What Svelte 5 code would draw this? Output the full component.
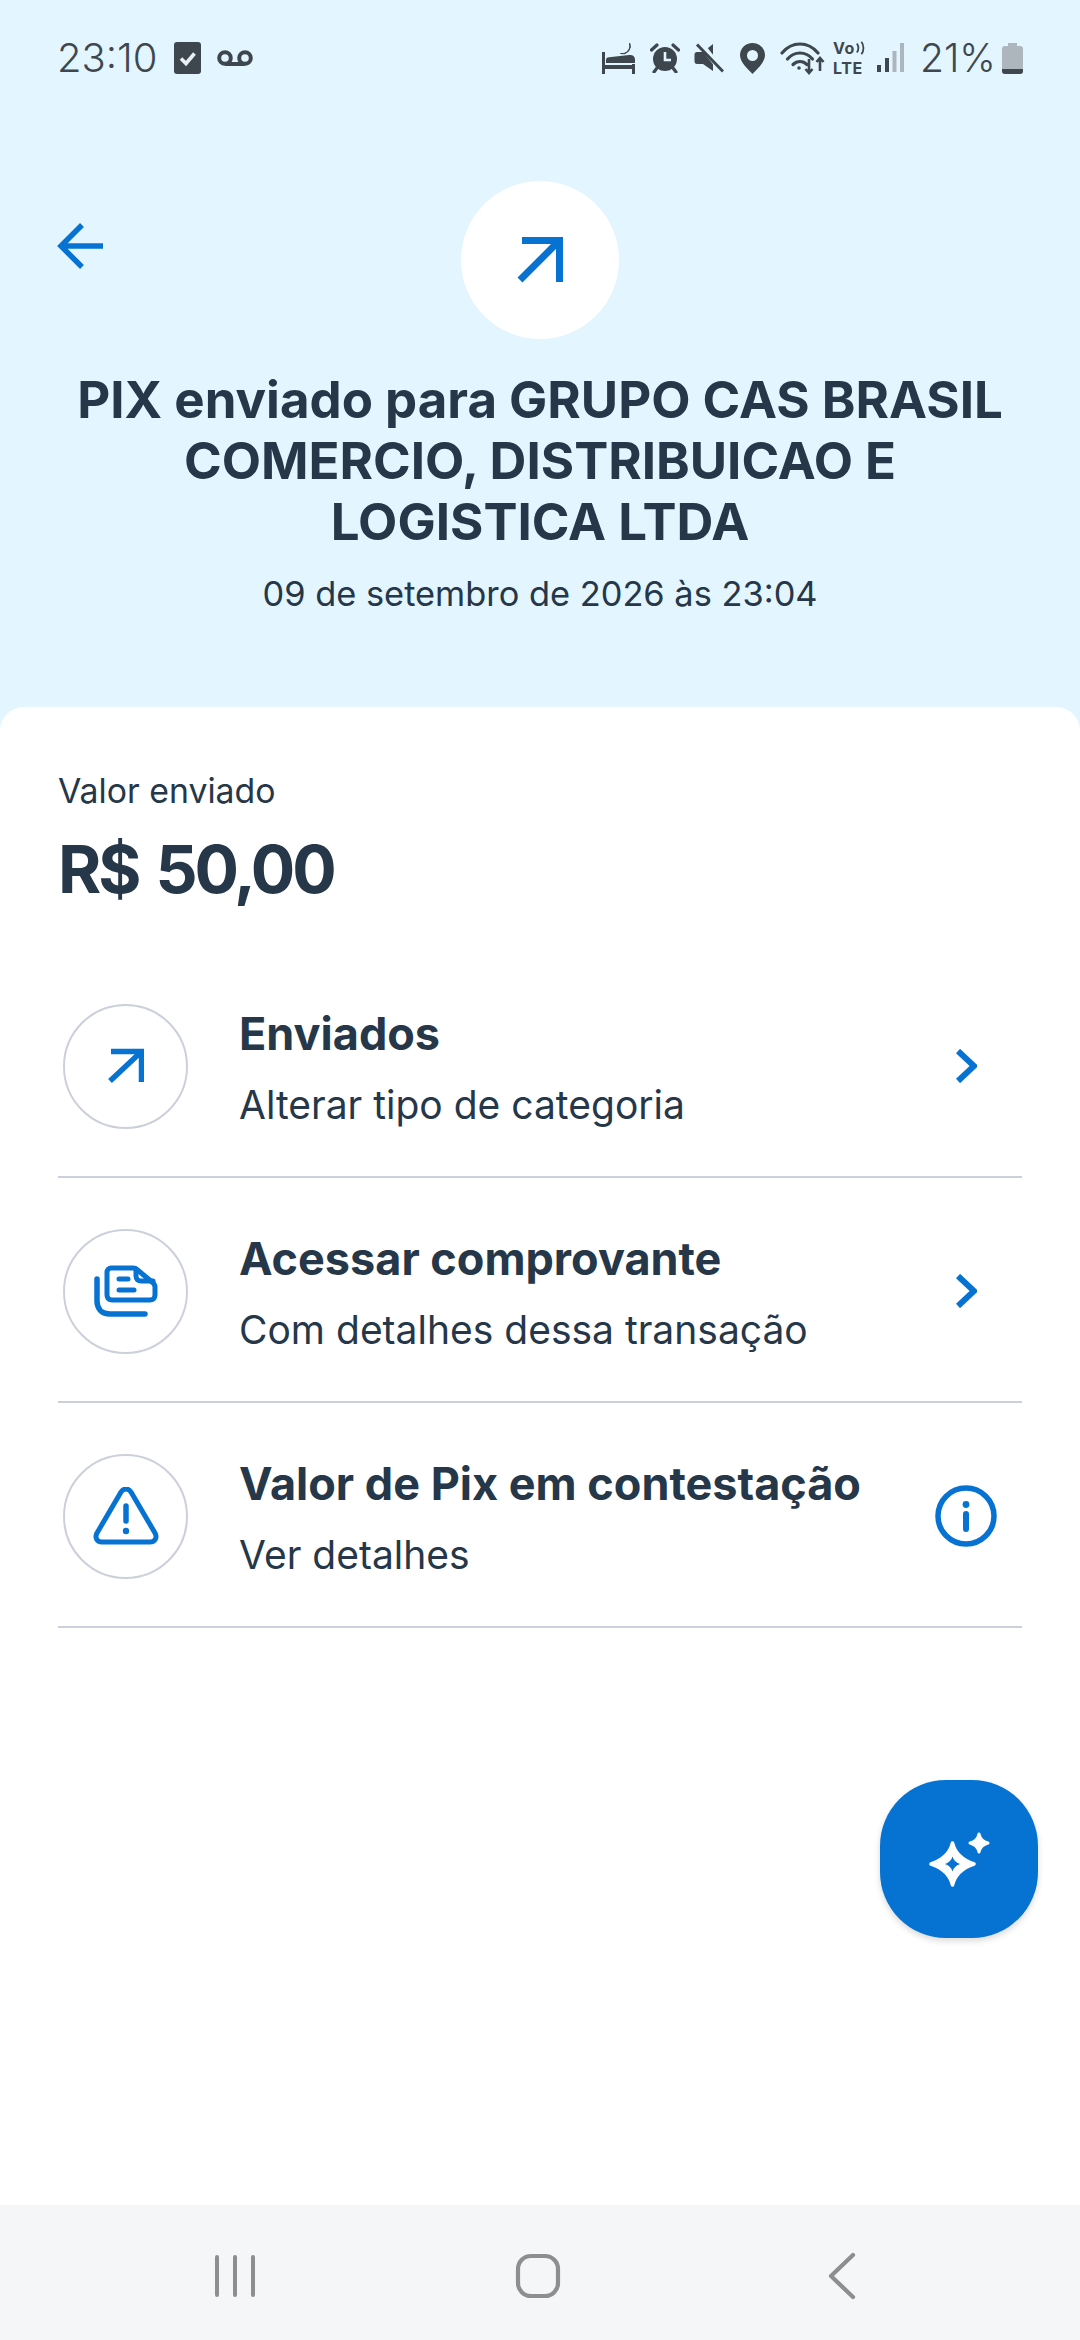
<script lang="ts">
	const rows = [
		{ icon: 'sent', title: 'Enviados', sub: 'Alterar tipo de categoria', end: 'chevron' },
		{ icon: 'doc', title: 'Acessar comprovante', sub: 'Com detalhes dessa transação', end: 'chevron' },
		{ icon: 'warn', title: 'Valor de Pix em contestação', sub: 'Ver detalhes', end: 'info' }
	];
</script>

<div class="page">
	<header class="hero">
		<div class="status">
			<span class="time">23:10</span>
			<svg class="s-check" width="27" height="32" viewBox="0 0 27 32">
				<rect width="27" height="32" rx="3" fill="#3f474e" />
				<path d="M7 16.500l5 5 8.500-10" fill="none" stroke="#e8f0f4" stroke-width="3.600" />
			</svg>
			<svg class="s-vm" width="36" height="16" viewBox="0 0 36 16">
				<circle cx="8" cy="8" r="5.800" fill="none" stroke="#3f474e" stroke-width="4" />
				<circle cx="28" cy="8" r="5.800" fill="none" stroke="#3f474e" stroke-width="4" />
				<path d="M8 14h20" stroke="#3f474e" stroke-width="4" />
			</svg>
			<span class="grow"></span>
			<svg width="34" height="31" viewBox="0 0 34 31" fill="#3f474e">
				<rect x="0" y="9" width="3" height="22" />
				<rect x="30" y="21" width="3" height="10" />
				<rect x="0" y="22" width="33" height="4" />
				<path d="M4 20v-3c0-1.500 1-2.500 3-2.700l20-2.300c3-.3 6 1 6 4.500V20z" />
				<path d="M27.500 0a7.500 7.500 0 0 1-9 10.500A8 8 0 0 0 27.500 0z" stroke="#3f474e" stroke-width="1" />
			</svg>
			<svg class="s-alarm" width="30" height="30" viewBox="0 0 30 30">
				<circle cx="15" cy="16" r="12" fill="#3f474e" />
				<path d="M15 9v8h6" fill="none" stroke="#e3f5ff" stroke-width="2.600" />
				<path d="M1.500 7L7 2M28.500 7L23 2M7 25l-3 4M23 25l3 4" stroke="#3f474e" stroke-width="3.200" stroke-linecap="round" />
			</svg>
			<svg class="s-mute" width="30" height="30" viewBox="0 0 30 30">
				<path d="M19 1v27L9 21H3c-1.500 0-2.500-1-2.500-2.500v-7C.5 10 1.500 9 3 9h6z" fill="#3f474e" />
				<path d="M6 0l22 28" stroke="#e3f5ff" stroke-width="6" />
				<path d="M3 1.500l26 27" stroke="#3f474e" stroke-width="3" />
			</svg>
			<svg class="s-pin" width="25" height="31" viewBox="0 0 25 31">
				<path fill-rule="evenodd" d="M12.500 0C5.500 0 0 5.500 0 12c0 7.500 8 14 12.500 19C17 26 25 19.500 25 12 25 5.500 19.500 0 12.500 0zm0 7a5.500 5.500 0 1 1 0 11 5.500 5.500 0 0 1 0-11z" fill="#3f474e" />
			</svg>
			<svg class="s-wifi" width="45" height="34" viewBox="0 0 45 34" fill="none" stroke="#3f474e" stroke-linecap="round">
				<path d="M2 12C12 0 28 0 38 12" stroke-width="3.200" />
				<path d="M7.500 18c7-8 18-8 25 0" stroke-width="3.200" />
				<path d="M13 23.500c4-4 10-4 14 0" stroke-width="3.200" />
				<circle cx="19" cy="27" r="1.800" fill="#3f474e" stroke="none" />
				<path d="M29 18v14M25.500 28l3.500 4 3.500-4M40 30V17M36.500 21l3.500-4 3.500 4" stroke-width="2.600" stroke-linecap="butt" />
			</svg>
			<span class="volte"><span class="vo">Vo<svg width="10" height="16" viewBox="0 0 10 16" fill="none" stroke="#3f474e" stroke-width="2"><path d="M1 3c2 3 2 7 0 10M6 1c3 4 3 10 0 14" /></svg></span><span>LTE</span></span>
			<svg class="s-sig" width="27" height="30" viewBox="0 0 27 30">
				<rect x="0" y="22" width="4" height="7" fill="#3f474e" />
				<rect x="8" y="15" width="4" height="14" fill="#3f474e" />
				<rect x="15.500" y="8" width="4" height="21" fill="#adb6bd" />
				<rect x="23" y="0" width="4" height="29" fill="#adb6bd" />
			</svg>
			<span class="pct">21%</span>
			<svg class="s-bat" width="21" height="31" viewBox="0 0 21 31">
				<path d="M6 0h9v3h3c2 0 3 1 3 3v22c0 2-1 3-3 3H3c-2 0-3-1-3-3V6c0-2 1-3 3-3h3z" fill="#adb6bd" />
				<path d="M0 26h21v2c0 2-1 3-3 3H3c-2 0-3-1-3-3z" fill="#3f474e" />
			</svg>
		</div>

		<div class="hero-top">
			<button class="back" aria-label="Voltar">
				<svg width="46" height="46" viewBox="0 0 46 46" fill="none" stroke="#0673d3" stroke-width="5.500">
					<path d="M46 23H4M25 2L4 23l21 21" />
				</svg>
			</button>
			<div class="disc">
				<svg width="46" height="46" viewBox="0 0 46 46" fill="none" stroke="#0673d3" stroke-width="7">
					<path d="M5 3.500h37.500V45M42 4L3 43" />
				</svg>
			</div>
		</div>

		<h1>PIX enviado para GRUPO CAS BRASIL COMERCIO, DISTRIBUICAO E LOGISTICA LTDA</h1>
		<p class="date">09 de setembro de 2026 às 23:04</p>
	</header>

	<main class="sheet">
		<p class="label">Valor enviado</p>
		<p class="amount">R$ 50,00</p>

		<ul class="list">
			{#each rows as row}
				<li class="row">
					<div class="ring">
						{#if row.icon === 'sent'}
							<svg width="36" height="36" viewBox="0 0 36 36" fill="none" stroke="#0673d3" stroke-width="5.500">
								<path d="M3 3.500h30.500V34M33 4L2 33" />
							</svg>
						{:else if row.icon === 'doc'}
							<svg width="64" height="52" viewBox="0 0 64 52" fill="none" stroke="#0673d3" stroke-width="5" stroke-linecap="round" stroke-linejoin="round">
								<path d="M17 3h22c2 0 3 .5 4 1.500L58 17c2 1.500 3 3 3 5v8c0 3-2 5-5 5H18c-3 0-5-2-5-5V7c0-2 2-4 4-4z" />
								<path d="M42 4v7c0 3 2 5 5 5h12" />
								<path d="M3 14v22c0 8 5 13 13 13h35" stroke-width="5.500" />
								<path d="M25 14h9M25 25h15" />
							</svg>
						{:else}
							<svg width="66" height="58" viewBox="0 0 66 58" fill="none" stroke="#0673d3" stroke-width="5" stroke-linecap="round" stroke-linejoin="round">
								<path d="M28 5c2.500-4 7.500-4 10 0l24 41c2.500 4.500 0 9-5 9H9c-5 0-7.500-4.500-5-9z" />
								<path d="M33 19v15" stroke-width="5.500" />
								<circle cx="33" cy="44" r="3.200" fill="#0673d3" stroke="none" />
							</svg>
						{/if}
					</div>
					<div class="copy">
						<strong>{row.title}</strong>
						<span>{row.sub}</span>
					</div>
					<div class="end">
						{#if row.end === 'chevron'}
							<svg width="21" height="34" viewBox="0 0 21 34" fill="none" stroke="#0673d3" stroke-width="6">
								<path d="M2 2l16 15L2 32" />
							</svg>
						{:else}
							<svg width="62" height="62" viewBox="0 0 62 62" fill="none" stroke="#0673d3">
								<circle cx="31" cy="31" r="28" stroke-width="5.500" />
								<circle cx="31" cy="19.500" r="3.400" fill="#0673d3" stroke="none" />
								<path d="M31 29v15" stroke-width="6" stroke-linecap="round" />
							</svg>
						{/if}
					</div>
				</li>
			{/each}
		</ul>

		<button class="fab" aria-label="Assistente">
			<svg width="61" height="55" viewBox="0 0 61 55">
				<path d="M23.500 11Q27 26 45 32 27 38 23.500 53 20 38 2 32 20 26 23.500 11z" fill="#fff" stroke="#fff" stroke-width="3.500" stroke-linejoin="round" />
				<path d="M23.500 24.500Q25 30 31 32 25 34 23.500 39.500 22 34 16 32 22 30 23.500 24.500z" fill="#0673d3" />
				<path d="M50 2Q51.500 9 59 11 51.500 13 50 20 48.500 13 41 11 48.500 9 50 2z" fill="#fff" stroke="#fff" stroke-width="3" stroke-linejoin="round" />
			</svg>
		</button>
	</main>

	<nav class="nav">
		<svg width="42" height="44" viewBox="0 0 42 44" stroke="#8e8e8e" stroke-width="4" stroke-linecap="round">
			<path d="M3 3v38M21 3v38M39 3v38" />
		</svg>
		<svg class="home" width="46" height="46" viewBox="0 0 46 46" fill="none" stroke="#8e8e8e" stroke-width="4.200">
			<rect x="3" y="3" width="40" height="40" rx="13" />
		</svg>
		<svg class="prev" width="28" height="48" viewBox="0 0 28 48" fill="none" stroke="#8e8e8e" stroke-width="4.200" stroke-linecap="round" stroke-linejoin="round">
			<path d="M25 3L3 24l22 21" />
		</svg>
	</nav>
</div>

<style>
	:global(body) {
		margin: 0;
		background: #fff;
	}

	.page {
		display: flex;
		flex-direction: column;
		height: 2340px;
		font-family: Inter, 'Liberation Sans', sans-serif;
		color: #253748;
		overflow: hidden;
	}

	.hero {
		height: 732px;
		background: #e3f5ff;
		flex: none;
	}

	.status {
		display: flex;
		align-items: center;
		height: 32px;
		padding: 42px 57px 0 57px;
		color: #3f474e;
	}

	.time {
		font-size: 40px;
		font-weight: 300;
		width: 117px;
		line-height: 32px;
	}

	.s-vm {
		margin-left: 16px;
	}

	.grow {
		flex: 1;
	}

	.s-alarm,
	.s-mute {
		margin-left: 14px;
	}

	.s-pin {
		margin-left: 16px;
	}

	.s-wifi {
		margin-left: 15px;
	}

	.volte {
		display: flex;
		flex-direction: column;
		margin-left: 8px;
		width: 32px;
		font-size: 16px;
		font-weight: 700;
		letter-spacing: 0.6px;
		line-height: 20px;
	}

	.vo {
		display: flex;
		align-items: center;
		gap: 1px;
	}

	.s-sig {
		margin-left: 12px;
	}

	.pct {
		font-size: 39px;
		font-weight: 300;
		line-height: 32px;
		margin-left: 16px;
		width: 74px;
	}

	.s-bat {
		margin-left: 8px;
	}

	.hero-top {
		display: grid;
		grid-template-columns: 404px 158px;
		padding: 107px 0 0 57px;
	}

	.back {
		all: unset;
		display: block;
		height: 46px;
		margin-top: 42px;
	}

	.disc {
		width: 158px;
		height: 158px;
		border-radius: 50%;
		background: #fff;
		display: flex;
		align-items: center;
		justify-content: center;
	}

	h1 {
		margin: 30px 0 0;
		padding: 0 60px;
		font-size: 51px;
		font-weight: 700;
		line-height: 61px;
		text-align: center;
	}

	.date {
		margin: 22px 0 0;
		font-size: 34.400px;
		line-height: 40px;
		text-align: center;
	}

	.sheet {
		position: relative;
		flex: 1;
		margin-top: -25px;
		padding: 0 58px;
		background: #fff;
		border-radius: 24px 24px 0 0;
	}

	.label {
		margin: 64px 0 0;
		font-size: 33.800px;
		line-height: 40px;
	}

	.amount {
		margin: 18px 0 0;
		font-size: 66px;
		font-weight: 700;
		letter-spacing: -3.200px;
		word-spacing: 5px;
		line-height: 80px;
	}

	.list {
		list-style: none;
		margin: 44px 0 0;
		padding: 0;
	}

	.row {
		display: flex;
		align-items: center;
		height: 225px;
		padding-top: 3px;
		box-sizing: border-box;
		border-bottom: 2px solid #ccd0db;
	}

	.ring {
		width: 125px;
		height: 125px;
		margin-left: 5px;
		box-sizing: border-box;
		border: 2.500px solid #ccd0db;
		border-radius: 50%;
		display: flex;
		align-items: center;
		justify-content: center;
		flex: none;
	}

	.copy {
		display: flex;
		flex-direction: column;
		gap: 28px;
		margin-left: 51px;
		padding-top: 4px;
		flex: 1;
	}

	.copy strong {
		font-size: 45px;
		font-weight: 700;
		line-height: 46px;
	}

	.copy span {
		font-size: 39px;
		line-height: 40px;
	}

	.end {
		width: 62px;
		display: flex;
		justify-content: center;
		margin-right: 25px;
	}

	.fab {
		all: unset;
		position: absolute;
		left: 880px;
		top: 1073px;
		width: 158px;
		height: 158px;
		border-radius: 66px;
		background: #0673d3;
		box-shadow: 0 3px 6px rgba(0, 0, 0, 0.15);
		display: flex;
		align-items: center;
		justify-content: center;
	}

	.nav {
		flex: none;
		display: flex;
		align-items: center;
		box-sizing: border-box;
		height: 135px;
		padding: 6px 0 0 214px;
		background: #f5f6f8;
	}

	.home {
		margin-left: 259px;
	}

	.prev {
		margin-left: 267px;
	}
</style>
